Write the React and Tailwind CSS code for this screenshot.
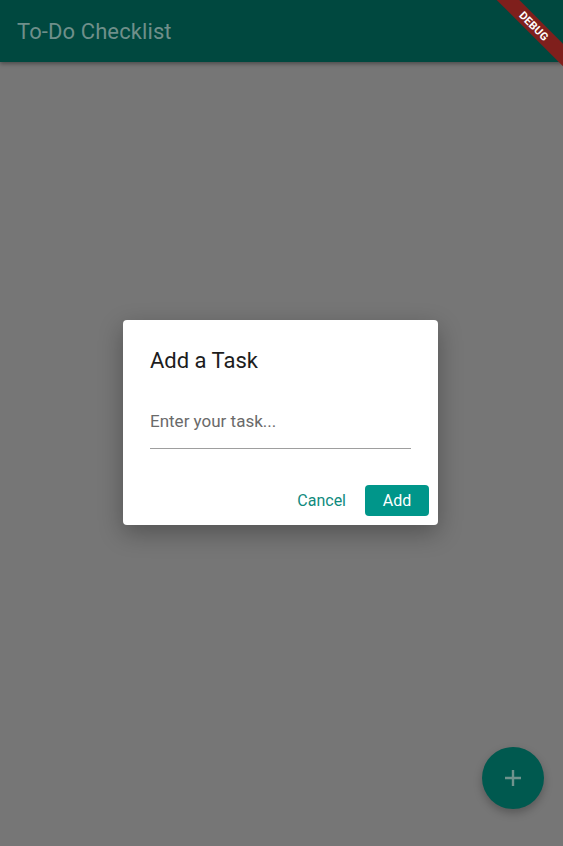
import React from 'react';

const App = () => {
  return (
    <div
      className="relative w-full h-[846px] overflow-hidden bg-[#767676] flex flex-col"
      style={{ fontFamily: 'Roboto, "Noto Sans", sans-serif' }}
    >
      {/* App bar */}
      <div className="h-[62px] bg-[#00483f] flex items-center px-[17px] shadow-[0_2px_4px_rgba(0,0,0,0.35)] z-10">
        <h1 className="text-[22px] text-[#6f8f8a] tracking-[0.1px]">To-Do Checklist</h1>
      </div>

      {/* Debug ribbon */}
      <div className="absolute top-0 right-0 w-[80px] h-[80px] overflow-hidden z-20 pointer-events-none">
        <div className="absolute top-[18px] right-[-27px] w-[112px] h-[16px] bg-[#7f1f1c] rotate-45 flex items-center justify-center">
          <span className="text-[11px] font-bold text-white leading-none tracking-[0.2px]">DEBUG</span>
        </div>
      </div>

      <div className="flex-1" />

      {/* Dialog */}
      <div className="absolute inset-0 flex items-center justify-center pb-[1px] pr-[2px]">
        <div className="w-[315px] h-[205px] bg-white rounded-[4px] shadow-[0_8px_24px_rgba(0,0,0,0.3)] flex flex-col px-[27px] pt-[26px] pb-[9px]">
          <h2 className="text-[22px] text-[#1d1d1d] leading-[30px]">Add a Task</h2>
          <div className="mt-[33px] border-b border-[#9e9e9e] pb-[13px]">
            <span className="text-[17px] text-[#6a6a6a]">Enter your task...</span>
          </div>
          <div className="mt-auto flex items-center justify-end gap-[19px] -mr-[18px]">
            <span className="text-[16px] font-normal text-[#0f8a7e]">Cancel</span>
            <div className="w-[64px] h-[31px] rounded-[4px] bg-[#00968a] flex items-center justify-center">
              <span className="text-[16px] font-normal text-white">Add</span>
            </div>
          </div>
        </div>
      </div>

      {/* FAB */}
      <div className="absolute right-[19px] bottom-[37px] w-[62px] h-[62px] rounded-full bg-[#00594f] shadow-[0_4px_8px_rgba(0,0,0,0.25)] flex items-center justify-center">
        <svg width="20" height="20" viewBox="0 0 20 20">
          <path d="M10 2v16M2 10h16" stroke="#6f938d" strokeWidth="2.4" />
        </svg>
      </div>
    </div>
  );
};

export default App;
